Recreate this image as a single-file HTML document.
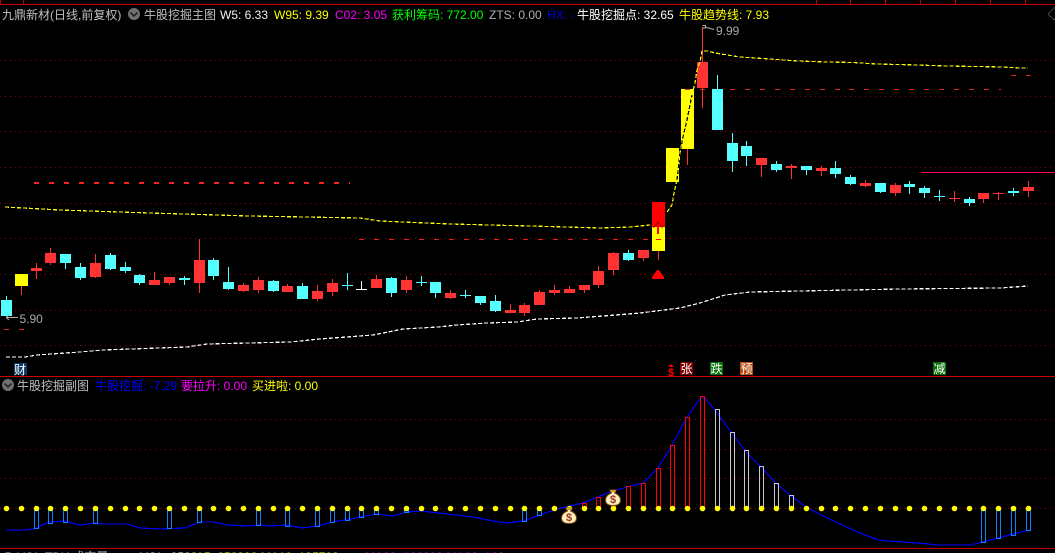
<!DOCTYPE html>
<html><head><meta charset="utf-8"><style>
html,body{margin:0;padding:0;background:#000;width:1055px;height:553px;overflow:hidden}
svg{display:block;position:absolute;left:0;top:0}
text{font-family:"Liberation Sans","WenQuanYi Zen Hei","Noto Sans CJK SC",sans-serif;font-size:12px}
</style></head><body>
<svg width="1055" height="553" viewBox="0 0 1055 553" xmlns="http://www.w3.org/2000/svg">
<defs><clipPath id="yc"><path d="M666 148h13v34h-13zM681 89h13v60h-13z"/></clipPath></defs>
<rect width="1055" height="553" fill="#000"/>
<g shape-rendering="crispEdges">
<!-- frame -->
<path d="M0 4.5H1055M0.5 0V4M23.5 0V4M816.5 0V4M850.5 0V4M885.5 0V4M920.5 0V4M955.5 0V4M990.5 0V4M1025.5 0V4M0 376.5H1055M0 548.5H1055" stroke="#c80000" fill="none"/>
<!-- grid -->
<path d="M0 60.5H1055M0 96.5H1055M0 131.5H1055M0 167.5H1055M0 203.5H1055M0 238.5H1055M0 274.5H1055M0 310.5H1055M0 345.5H1055M0 419.5H1055M0 449.5H1055M0 478.5H1055M0 508.5H1055" stroke="#900000" stroke-dasharray="1 4" fill="none"/>
<!-- dashed red levels -->
<path d="M34 183H350" stroke="#ff2020" stroke-width="2" stroke-dasharray="5 10" fill="none"/>
<path d="M359 239.500H508M508 239.500H657M657 239.500H665M685 89.500H849M849 89.500H1001M1011 75.500H1031M4 329.500H24" stroke="#e02020" stroke-dasharray="5 10" fill="none"/>
<path d="M921 172.500H1055" stroke="#ff0066" stroke-width="1.400" fill="none"/>
<!-- candles cyan -->
<path fill="#54ffff" d="M1 300h11v16h-11zM6 296h1v20h-1zM60 254h11v9h-11zM65 254h1v15h-1zM75 267h11v11h-11zM80 263h1v17h-1zM105 255h11v14h-11zM110 253h1v17h-1zM120 267h11v4h-11zM125 262h1v11h-1zM134 275h11v8h-11zM139 274h1v11h-1zM179 278h11v2h-11zM184 276h1v9h-1zM208 260h11v16h-11zM213 258h1v22h-1zM223 282h11v7h-11zM228 267h1v23h-1zM268 281h11v10h-11zM273 280h1v12h-1zM297 286h11v13h-11zM302 283h1v16h-1zM342 285h11v1h-11zM347 273h1v17h-1zM386 278h11v15h-11zM391 277h1v20h-1zM416 282h11v1h-11zM421 276h1v10h-1zM430 282h11v11h-11zM435 282h1v16h-1zM460 295h11v1h-11zM465 290h1v8h-1zM475 296h11v7h-11zM480 296h1v9h-1zM490 301h11v10h-11zM495 295h1v17h-1zM623 253h11v7h-11zM628 250h1v11h-1zM712 89h11v41h-11zM717 75h1v55h-1zM727 143h11v18h-11zM732 133h1v39h-1zM741 146h11v10h-11zM746 141h1v25h-1zM771 164h11v6h-11zM776 161h1v11h-1zM801 166h11v4h-11zM806 166h1v9h-1zM830 168h11v6h-11zM835 161h1v17h-1zM845 177h11v7h-11zM850 175h1v10h-1zM875 183h11v9h-11zM880 183h1v10h-1zM904 184h11v3h-11zM909 181h1v13h-1zM919 188h11v5h-11zM924 186h1v12h-1zM934 196h11v1h-11zM939 190h1v11h-1zM964 199h11v4h-11zM969 197h1v9h-1zM1008 191h11v2h-11zM1013 188h1v8h-1z"/>
<!-- candles red -->
<path fill="#ff3333" d="M31 268h11v3h-11zM36 263h1v16h-1zM45 253h11v10h-11zM50 248h1v17h-1zM90 263h11v14h-11zM95 254h1v24h-1zM149 280h11v5h-11zM154 272h1v13h-1zM164 277h11v6h-11zM169 277h1v8h-1zM194 260h11v23h-11zM199 239h1v54h-1zM238 285h11v6h-11zM243 283h1v9h-1zM253 280h11v10h-11zM258 277h1v16h-1zM282 286h11v6h-11zM287 284h1v8h-1zM312 291h11v8h-11zM317 285h1v16h-1zM327 283h11v9h-11zM332 279h1v17h-1zM371 279h11v9h-11zM376 275h1v13h-1zM401 280h11v10h-11zM406 276h1v17h-1zM445 293h11v5h-11zM450 290h1v9h-1zM505 310h11v3h-11zM510 304h1v9h-1zM519 305h11v8h-11zM524 303h1v13h-1zM534 292h11v13h-11zM539 290h1v15h-1zM549 290h11v3h-11zM554 285h1v10h-1zM564 289h11v4h-11zM569 286h1v7h-1zM579 285h11v5h-11zM584 285h1v8h-1zM593 271h11v14h-11zM598 266h1v22h-1zM608 253h11v17h-11zM613 252h1v23h-1zM638 250h11v8h-11zM643 250h1v11h-1zM697 62h11v26h-11zM702 27h1v81h-1zM756 158h11v7h-11zM761 158h1v19h-1zM786 166h11v2h-11zM791 164h1v15h-1zM816 168h11v3h-11zM821 166h1v10h-1zM860 183h11v3h-11zM865 180h1v7h-1zM890 185h11v8h-11zM895 183h1v13h-1zM949 198h11v1h-11zM954 191h1v11h-1zM978 193h11v6h-11zM983 193h1v10h-1zM993 193h11v1h-11zM998 192h1v8h-1zM1023 187h11v4h-11zM1028 181h1v16h-1zM21 286h1v9h-1zM658 251h1v9h-1zM687 149h1v16h-1z"/>
<path fill="#ffffff" d="M356 289h11v1h-11zM361 281h1v9h-1z"/>
<!-- limit-up candles -->
<path fill="#ffff00" d="M15 274h13v12h-13zM652 227h13v24h-13zM666 148h13v34h-13zM681 89h13v60h-13z"/>
<path fill="#ff0000" d="M652 202h13v25h-13zM657 227h2v7h-2zM656 239h5v1h-5z"/>
<path d="M653.500 227.500L658 222.500L662.500 227.500" fill="none" stroke="#600000" stroke-dasharray="2 1"/>
<path d="M685 89.500h5M700 89.500h5" stroke="#e02020" fill="none"/>
<!-- signal triangle -->
<path fill="#ff0000" d="M652 279v-2L657 270h2L664 277v2z"/>
<!-- trend yellow -->
<path fill="none" stroke="#ffff00" stroke-width="1.200" stroke-dasharray="4 2" d="M5 207L60 210L150 213L250 216L360 218L380 221L450 224L530 226L600 228L630 227L650 225M667 212L672 205L674 193L677 180L680 153L683 137L687 120L692 95L695 83L697 70L700 62L702 51L708 51L715 53L740 57L770 59L798 61L828 62L853 62.500L877 64L917 65L947 66L1003 67L1020 68L1028 68"/>
<path clip-path="url(#yc)" fill="none" stroke="#000" stroke-width="1.200" stroke-dasharray="4 2" d="M677 180L680 153L683 137L687 120L692 95"/>
<!-- white -->
<path fill="none" stroke="#ffffff" stroke-width="1.200" stroke-dasharray="4 2" d="M6 357L25 357L37 355L80 352L103 350L187 347L207 344L290 342L320 339L373 335L403 329L438 327L457 325L487 323L517 322L537 319L577 318L603 316L640 313L680 308L700 303L725 295L750 292L800 291L900 289L1000 288L1028 286"/>
<!-- sub chart line -->
<path fill="none" stroke="#0000ff" stroke-width="1.200" d="M6 530L25 530L36 528.500L42 525L50 522L65 521L72 523L80 525L95 523L103 524L127 524L140 528L160 529L185 528L200 522L213 522L227 525L247 526L260 525L270 526L287 525L302 528L317 526L333 522L350 519L360 517L377 514L392 516L407 512L421 511L447 514L473 517L493 521L507 523L523 521L540 515L557 509L583 503L610 492L627 487L643 483L658 468L672 445L687 417L702 396L705 398L717 413L732 433L746 452L761 467L776 483L791 496L806 507L821 515L840 524L860 533L878 540L888 541L903 542L917 543L928 544L937 545L970 545L983 542L998 538L1013 534L1030 530"/>
<!-- bars -->
<path fill="none" stroke="#0a80ff" d="M34.500 508V528.500H38.500V508M48.500 508V523.500H52.500V508M63.500 508V522.500H67.500V508M93.500 508V523.500H97.500V508M167.500 508V528.500H171.500V508M197.500 508V522.500H201.500V508M256.500 508V525.500H260.500V508M285.500 508V526.500H289.500V508M315.500 508V526.500H319.500V508M330.500 508V522.500H334.500V508M345.500 508V520.500H349.500V508M359.500 508V517.500H363.500V508M374.500 508V514.500H378.500V508M404.500 508V512.500H408.500V508M522.500 508V521.500H526.500V508M537.500 508V515.500H541.500V508M981.500 508V542.500H985.500V508M996.500 508V538.500H1000.500V508M1011.500 508V535.500H1015.500V508M1026.500 508V530.500H1030.500V508"/>
<path fill="none" stroke="#ff0000" d="M582.500 508V503.500H586.500V508M596.500 508V497.500H600.500V508M611.500 508V490.500H615.500V508M626.500 508V486.500H630.500V508M641.500 508V483.500H645.500V508M656.500 508V468.500H660.500V508M670.500 508V445.500H674.500V508M685.500 508V417.500H689.500V508M700.500 508V396.500H704.500V508"/>
<path fill="none" stroke="#c8c8c8" d="M715.500 508V409.500H719.500V508M730.500 508V432.500H734.500V508M744.500 508V450.500H748.500V508M759.500 508V466.500H763.500V508M774.500 508V483.500H778.500V508M789.500 508V495.500H793.500V508"/>
</g>
<!-- yellow dots -->
<path fill="none" stroke="#ffff00" stroke-width="5.600" stroke-linecap="round" d="M6.500 508.500h0M21.500 508.500h0M36.500 508.500h0M50.500 508.500h0M65.500 508.500h0M80.500 508.500h0M95.500 508.500h0M110.500 508.500h0M125.500 508.500h0M139.500 508.500h0M154.500 508.500h0M169.500 508.500h0M184.500 508.500h0M199.500 508.500h0M213.500 508.500h0M228.500 508.500h0M243.500 508.500h0M258.500 508.500h0M273.500 508.500h0M287.500 508.500h0M302.500 508.500h0M317.500 508.500h0M332.500 508.500h0M347.500 508.500h0M361.500 508.500h0M376.500 508.500h0M391.500 508.500h0M406.500 508.500h0M421.500 508.500h0M435.500 508.500h0M450.500 508.500h0M465.500 508.500h0M480.500 508.500h0M495.500 508.500h0M510.500 508.500h0M524.500 508.500h0M539.500 508.500h0M554.500 508.500h0M569.500 508.500h0M584.500 508.500h0M598.500 508.500h0M613.500 508.500h0M628.500 508.500h0M643.500 508.500h0M658.500 508.500h0M672.500 508.500h0M687.500 508.500h0M702.500 508.500h0M717.500 508.500h0M732.500 508.500h0M746.500 508.500h0M761.500 508.500h0M776.500 508.500h0M791.500 508.500h0M806.500 508.500h0M821.500 508.500h0M835.500 508.500h0M850.500 508.500h0M865.500 508.500h0M880.500 508.500h0M895.500 508.500h0M909.500 508.500h0M924.500 508.500h0M939.500 508.500h0M954.500 508.500h0M969.500 508.500h0M983.500 508.500h0M998.500 508.500h0M1013.500 508.500h0M1028.500 508.500h0"/>
<!-- money bags -->
<g transform="translate(569,515)">
<path d="M-3 -7h6l-1.500 3c4 1.500 6 4 6 7c0 4-3 5.500-7.500 5.500s-7.500-1.500-7.500-5.500c0-3 2-5.500 6-7z" fill="#fff2b8" stroke="#7a4a18" stroke-width="1"/>
<path d="M-3 -7h6l-1 2h-4z" fill="#d8a020"/>
<text x="0" y="6" text-anchor="middle" style="font-size:11px;font-weight:bold" fill="#a03030">$</text>
</g>
<g transform="translate(613,497)">
<path d="M-3 -7h6l-1.500 3c4 1.500 6 4 6 7c0 4-3 5.500-7.500 5.500s-7.500-1.500-7.500-5.500c0-3 2-5.500 6-7z" fill="#fff2b8" stroke="#7a4a18" stroke-width="1"/>
<path d="M-3 -7h6l-1 2h-4z" fill="#d8a020"/>
<text x="0" y="6" text-anchor="middle" style="font-size:11px;font-weight:bold" fill="#a03030">$</text>
</g>
<!-- labels -->
<rect x="14" y="363" width="13" height="12" fill="#0c3a68"/>
<text x="14" y="374" fill="#fff">财</text>
<rect x="680" y="362" width="13" height="13" fill="#800000"/>
<text x="680.500" y="373" fill="#fff">张</text>
<rect x="710" y="362" width="13" height="13" fill="#0a700a"/>
<text x="710.500" y="373" fill="#fff">跌</text>
<rect x="740" y="362" width="13" height="13" fill="#b84a10"/>
<text x="740.500" y="373" fill="#fff">预</text>
<rect x="933" y="362" width="13" height="13" fill="#0a700a"/>
<text x="933.500" y="373" fill="#fff">减</text>
<path d="M671 364l3 3h-6z" fill="#ff0000"/>
<text x="668" y="376" fill="#ff0000" style="font-size:11px;font-weight:bold">$</text>
<!-- price marks -->
<path d="M702.500 25.500h3v2.500h-3M705 27L714 29.500" fill="none" stroke="#b0b0b0" stroke-width="1"/>
<text x="716" y="35" fill="#a8a8a8">9.99</text>
<path d="M6 317.500H18M6 317.500L9 315M6 317.500L9 320" fill="none" stroke="#b0b0b0" stroke-width="1"/>
<text x="19.500" y="323" fill="#a8a8a8">5.90</text>
<path d="M1048 14L1054 8L1060 14L1054 20Z" fill="none" stroke="#808080" stroke-dasharray="1 1"/>
<!-- top title -->
<text x="2" y="19" fill="#c0c0c0">九鼎新材(日线,前复权)</text>
<circle cx="134" cy="14" r="6" fill="#707070"/>
<path d="M130.500 12.500L134 16L137.500 12.500" fill="none" stroke="#1a1a1a" stroke-width="1.500"/>
<text x="144" y="19" fill="#c0c0c0">牛股挖掘主图</text>
<text x="220" y="19" fill="#f0f0f0">W5: 6.33</text>
<text x="274" y="19" fill="#ffff00">W95: 9.39</text>
<text x="335" y="19" fill="#ff00ff">C02: 3.05</text>
<text x="392" y="19" fill="#00ff00">获利筹码: 772.00</text>
<text x="489" y="19" fill="#b0b0b0">ZTS: 0.00</text>
<text x="547" y="19" fill="#0000e0">HX: -</text>
<text x="577" y="19" fill="#ffffff">牛股挖掘点: 32.65</text>
<text x="679" y="19" fill="#ffff00">牛股趋势线: 7.93</text>
<!-- sub title -->
<circle cx="8" cy="385" r="6" fill="#707070"/>
<path d="M4.500 383.500L8 387L11.500 383.500" fill="none" stroke="#1a1a1a" stroke-width="1.500"/>
<text x="17" y="390" fill="#c0c0c0">牛股挖掘副图</text>
<text x="95" y="390" fill="#0000ff">牛股挖掘: -7.29</text>
<text x="181" y="390" fill="#ff00ff">要拉升: 0.00</text>
<text x="252" y="390" fill="#ffff00">买进啦: 0.00</text>
<!-- cut-off bottom row -->
<circle cx="8" cy="558" r="6" fill="#707070"/>
<text x="17" y="561" fill="#c0c0c0">VOL-TDX 成交量</text>
<text x="140" y="561" fill="#ffffff">VOL: 3589</text>
<text x="186" y="561" fill="#ffff00">MA5: 258308 MA10: 195703</text>
<text x="365" y="561" fill="#ff00ff">MA20: 168208 MA60: 100</text>
</svg>
</body></html>
